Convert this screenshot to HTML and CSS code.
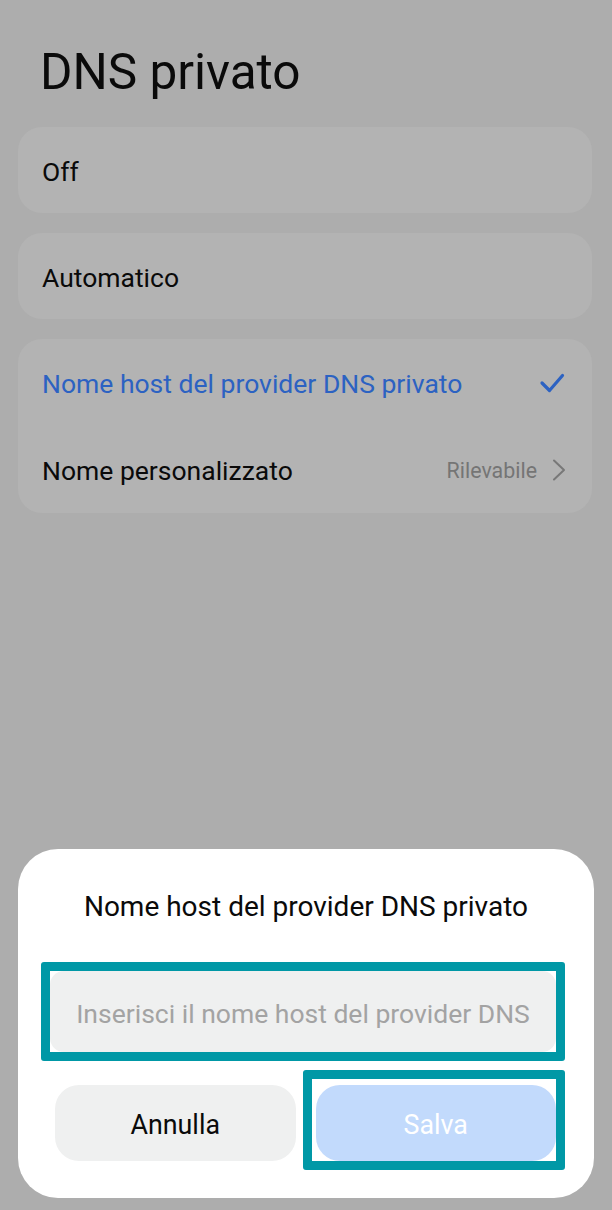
FILE: index.html
```html
<!DOCTYPE html>
<html>
<head>
    <title>DNS privato</title>
    <link rel="stylesheet" href="styles.css">
</head>
<body>
<div class="screen">
    <h1 class="page-title">DNS privato</h1>

    <div class="groups">
        <div class="group">
            <div class="row">
                <span class="row-label">Off</span>
            </div>
        </div>

        <div class="group">
            <div class="row">
                <span class="row-label">Automatico</span>
            </div>
        </div>

        <div class="group">
            <div class="row selected">
                <span class="row-label">Nome host del provider DNS privato</span>
                <svg class="check" width="26" height="22" viewBox="0 0 26 22">
                    <path d="M3 11 L10.5 18.5 L23.5 3.5" fill="none" stroke="#2c62c2" stroke-width="3.2" stroke-linecap="round" stroke-linejoin="round"/>
                </svg>
            </div>
            <div class="row">
                <span class="row-label">Nome personalizzato</span>
                <span class="row-value">Rilevabile</span>
                <svg class="chevron" width="14" height="22" viewBox="0 0 14 22">
                    <path d="M2 1.5 L12 11 L2 20.5" fill="none" stroke="#787878" stroke-width="2" stroke-linecap="round" stroke-linejoin="round"/>
                </svg>
            </div>
        </div>
    </div>

    <!-- bottom sheet for editing the hostname -->
    <div class="sheet">
        <div class="sheet-title">Nome host del provider DNS privato</div>

        <div class="field-wrap">
            <div class="field">Inserisci il nome host del provider DNS</div>
            <div class="mark mark-field"></div>
        </div>

        <div class="actions">
            <div class="btn btn-cancel">Annulla</div>
            <div class="btn-wrap">
                <div class="btn btn-save">Salva</div>
                <div class="mark mark-save"></div>
            </div>
        </div>
    </div>
</div>
</body>
</html>
```

FILE: styles.css
```css
/* settings screen, dimmed behind the bottom sheet */
body {
    margin: 0;
    background: #adadad;
    font-family: Roboto, "Liberation Sans", sans-serif;
}

.screen {
    position: relative;
    width: 612px;
    height: 1210px;
    overflow: hidden;
}

.page-title {
    margin: 0;
    padding: 42px 0 0 40px;
    height: 65px;
    font-size: 49.5px;
    font-weight: 400;
    line-height: 60px;
    color: #0a0a0a;
}

.groups {
    display: flex;
    flex-direction: column;
    gap: 20px;
    padding: 20px 20px 0 18px;
}

.group {
    background: #b3b3b3;
    border-radius: 24px;
}

.row {
    display: flex;
    align-items: center;
    height: 86px;
    padding: 2px 26px 0 24px;
    box-sizing: border-box;
}

.group .row + .row {
    height: 88px;
}

.row-label {
    flex: 1;
    font-size: 26.5px;
    color: #0a0a0a;
}

.row.selected .row-label {
    color: #2c62c2;
}

.row-value {
    font-size: 21.4px;
    color: #757575;
    margin-right: 15px;
}

.check {
    margin-right: 1px;
}

/* bottom sheet */
.sheet {
    position: absolute;
    left: 18px;
    top: 849px;
    width: 576px;
    height: 349px;
    box-sizing: border-box;
    padding: 42px 38px 0 32px;
    background: #fff;
    border-radius: 40px;
}

.sheet-title {
    text-align: center;
    font-size: 28px;
    line-height: 32px;
    color: #0a0a0a;
    padding-left: 6px;
}

.field-wrap {
    position: relative;
    margin-top: 48px;
}

.field {
    height: 81px;
    line-height: 86px;
    background: #eff0f0;
    border-radius: 14px;
    text-align: center;
    font-size: 26.5px;
    color: #a3a3a3;
}

.actions {
    display: flex;
    gap: 20px;
    margin-top: 33px;
    padding-left: 5px;
}

.btn {
    height: 76px;
    line-height: 80px;
    border-radius: 24px;
    text-align: center;
    font-size: 26.8px;
}

.btn-cancel {
    flex: 1;
    background: #eff0f0;
    color: #0a0a0a;
}

.btn-wrap {
    position: relative;
    flex: 1;
}

.btn-save {
    background: #c2dafc;
    color: #fff;
}

/* teal highlight frames */
.mark {
    position: absolute;
    border: 9px solid #0098a6;
    border-radius: 3px;
}

.mark-field {
    left: -9px;
    top: -9px;
    right: -9px;
    bottom: -9px;
}

.mark-save {
    left: -13px;
    top: -15px;
    right: -9px;
    bottom: -9px;
}
```
